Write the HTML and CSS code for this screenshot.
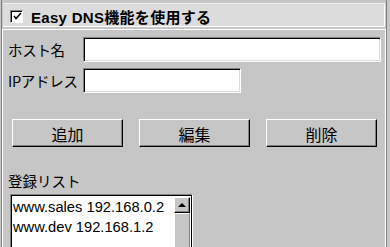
FILE: index.html
```html
<!DOCTYPE html>
<html>

	<head>
		<meta charset="UTF-8">
		<title>Easy DNS</title>
		<link rel="stylesheet" href="styles.css">
	</head>

	<body>
		<div class="frame">
			<div class="header">
				<span class="check">
					<svg width="9" height="9" viewBox="0 0 9 9"><path d="M1 4 L3 6.5 L8 1" fill="none" stroke="#000" stroke-width="1.6"/></svg>
				</span>
				<span class="title">Easy DNS機能を使用する</span>
			</div>
			<div class="panel">
				<div class="row">
					<span class="label">ホスト名</span>
					<div class="input host"></div>
				</div>
				<div class="row">
					<span class="label">IPアドレス</span>
					<div class="input ip"></div>
				</div>
				<div class="buttons">
					<div class="btn">追加</div>
					<div class="btn">編集</div>
					<div class="btn">削除</div>
				</div>
				<div class="listlabel">登録リスト</div>
				<div class="listbox">
					<div class="items">
						<div class="item">www.sales 192.168.0.2</div>
						<div class="item">www.dev 192.168.1.2</div>
					</div>
					<div class="scroll">
						<div class="up"><span class="arrow"></span></div>
						<div class="thumb"></div>
					</div>
				</div>
			</div>
		</div>
	</body>

</html>
```

FILE: styles.css
```css
* {
	padding: 0;
	margin: 0;
	box-sizing: border-box;
}

body {
	width: 390px;
	height: 247px;
	overflow: hidden;
	background: #c6c6c6;
	font-family: "Liberation Sans", "Noto Sans CJK JP", sans-serif;
	color: #000;
}

.frame {
	height: 247px;
	margin-left: 1px;
	margin-right: 3px;
	padding-top: 3px;
	border-left: 1px solid #808080;
	border-right: 1px solid #808080;
	display: flex;
	flex-direction: column;
}

.header {
	height: 24px;
	margin: 0 1px;
	background: #dcdcdc;
	border-top: 1px solid #f0f0f0;
	border-bottom: 1px solid #fff;
	border-right: 1px solid #fff;
	display: flex;
	align-items: center;
	padding-left: 7px;
	padding-top: 2px;
}

.check {
	width: 13px;
	height: 13px;
	background: #fff;
	border: 1px solid;
	border-color: #808080 #fff #fff #808080;
	box-shadow: inset 1px 1px 0 #000;
	display: flex;
	align-items: center;
	justify-content: center;
	padding: 1px 0 0 1px;
}

.check svg {
	display: block;
}

.title {
	margin-left: 8px;
	font-size: 15px;
	font-weight: bold;
	letter-spacing: 0.3px;
}

.panel {
	flex: 1;
	margin-top: 2px;
	border-top: 1px solid #fff;
	border-left: 1px solid #fff;
	border-right: 1px solid #fff;
	padding: 7px 0 0 5px;
	display: flex;
	flex-direction: column;
}

.row {
	display: flex;
	align-items: center;
	height: 25px;
	margin-bottom: 6px;
}

.label {
	width: 75px;
	font-size: 14.5px;
	font-family: "Noto Sans CJK JP", sans-serif;
	letter-spacing: -0.3px;
}

.input {
	height: 25px;
	background: #fff;
	border: 1px solid;
	border-color: #808080 #fff #fff #808080;
	box-shadow: inset 1px 1px 0 #000, inset -1px -1px 0 #dcdcdc;
}

.host {
	width: 298px;
}

.ip {
	width: 158px;
}

.buttons {
	display: flex;
	gap: 16px;
	margin-top: 20px;
	margin-left: 4px;
}

.btn {
	width: 111px;
	height: 28px;
	border: 1px solid;
	border-color: #fff #000 #000 #fff;
	box-shadow: inset -1px -1px 0 #808080;
	display: flex;
	align-items: center;
	justify-content: center;
	font-size: 16px;
	font-family: "Noto Sans CJK JP", sans-serif;
	padding-top: 1px;
}

.listlabel {
	margin-top: 23px;
	height: 22px;
	line-height: 22px;
	font-size: 14.5px;
	font-family: "Noto Sans CJK JP", sans-serif;
}

.listbox {
	flex: 1;
	width: 183px;
	margin-left: 2px;
	margin-top: 2px;
	background: #fff;
	border: 1px solid;
	border-color: #808080 #fff #fff #808080;
	border-bottom: none;
	box-shadow: inset 1px 1px 0 #000, inset -1px 0 0 #000;
	display: flex;
	padding: 2px 2px 0 2px;
}

.items {
	flex: 1;
	padding-left: 0;
}

.item {
	height: 20px;
	line-height: 20px;
	font-size: 14.7px;
	white-space: nowrap;
}

.scroll {
	width: 16px;
	display: flex;
	flex-direction: column;
}

.up {
	height: 16px;
	background: #c6c6c6;
	border: 1px solid;
	border-color: #fff #000 #000 #fff;
	box-shadow: inset -1px -1px 0 #808080;
	display: flex;
	align-items: center;
	justify-content: center;
}

.arrow {
	width: 0;
	height: 0;
	border-left: 4px solid transparent;
	border-right: 4px solid transparent;
	border-bottom: 4px solid #000;
	margin-bottom: 1px;
}

.thumb {
	flex: 1;
	background: #c6c6c6;
	border-left: 1px solid #fff;
	border-right: 1px solid #808080;
	border-top: 1px solid #fff;
}
```
